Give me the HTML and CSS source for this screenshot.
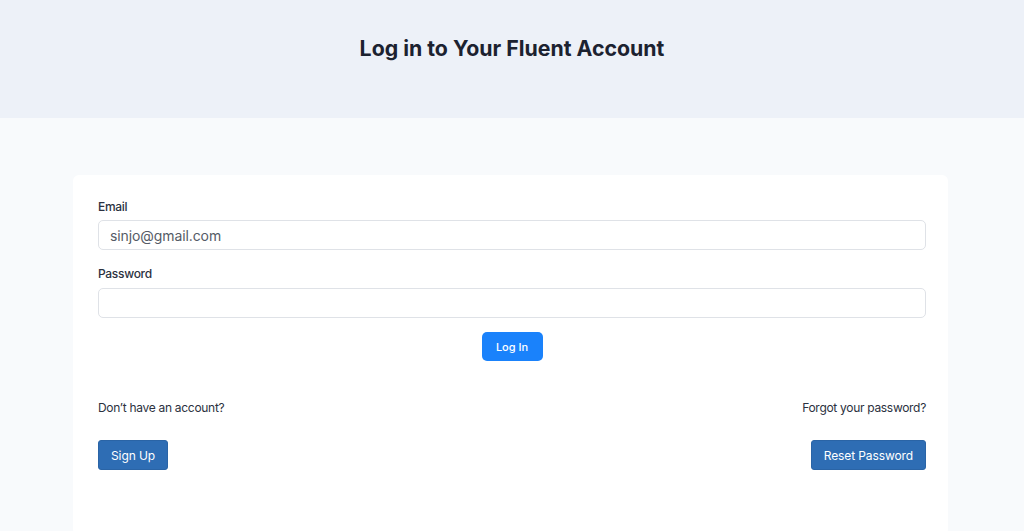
FILE: index.html
```html
<!DOCTYPE html>
<html lang="en">
<head>
<meta charset="utf-8">
<title>Log in</title>
<link rel="stylesheet" href="styles.css">
</head>
<body>
<header class="top">
  <h1 class="title">Log in to Your Fluent Account</h1>
</header>
<main class="main">
  <section class="card">
    <form class="form">
      <label class="label" for="email">Email</label>
      <input class="input" id="email" type="text" value="sinjo@gmail.com">
      <label class="label label-pw" for="pw">Password</label>
      <input class="input" id="pw" type="password">
      <div class="submit-row">
        <button class="btn-login" type="button">Log In</button>
      </div>
    </form>
    <div class="links">
      <div class="col">
        <p class="note">Don’t have an account?</p>
        <button class="btn-alt" type="button">Sign Up</button>
      </div>
      <div class="col col-right">
        <p class="note">Forgot your password?</p>
        <button class="btn-alt" type="button">Reset Password</button>
      </div>
    </div>
  </section>
</main>
</body>
</html>
```

FILE: styles.css
```css
* { box-sizing: border-box; }
html, body { margin: 0; padding: 0; }
body {
  font-family: Inter, "Liberation Sans", sans-serif;
  background: #f8fafc;
  color: #1f2937;
  height: 531px;
  overflow: hidden;
}
.top {
  height: 118px;
  background: #edf1f8;
  display: flex;
  align-items: center;
  justify-content: center;
}
.title {
  margin: 0;
  font-size: 21.3px;
  font-weight: 700;
  color: #1c2230;
  padding-bottom: 22px;
}
.main {
  padding: 57px 76px 0 73px;
}
.card {
  background: #ffffff;
  border-radius: 6px;
  padding: 24px 22px 60px 25px;
  height: 360px;
}
.form { display: flex; flex-direction: column; }
.label {
  font-size: 12px;
  font-weight: 500;
  letter-spacing: -0.3px;
  color: #2b3140;
  line-height: 16px;
  margin-bottom: 5px;
}
.label-pw { margin-top: 16px; margin-bottom: 6px; }
.input {
  height: 30px;
  border: 1px solid #dfe2e7;
  border-radius: 5px;
  padding: 0 11px;
  font-family: inherit;
  font-size: 14px;
  letter-spacing: -0.1px;
  color: #555b66;
  background: #fff;
  outline: none;
}
.submit-row {
  display: flex;
  justify-content: center;
  margin-top: 14px;
}
.btn-login {
  width: 61px;
  height: 29px;
  background: #1a82fb;
  color: #fff;
  border: none;
  border-radius: 5px;
  font-family: inherit;
  font-size: 11px;
  font-weight: 500;
}
.links {
  display: flex;
  justify-content: space-between;
  margin-top: 39px;
}
.col { display: flex; flex-direction: column; align-items: flex-start; }
.col-right { align-items: flex-end; }
.note {
  margin: 0;
  font-size: 12px;
  letter-spacing: -0.3px;
  line-height: 16px;
  color: #2b3140;
}
.btn-alt {
  margin-top: 24px;
  height: 30px;
  padding: 0 12px;
  background: #2e6db4;
  color: #fff;
  border: 1px solid #2a64a6;
  border-radius: 3px;
  font-family: inherit;
  font-size: 12px;
  letter-spacing: -0.1px;
}
```
